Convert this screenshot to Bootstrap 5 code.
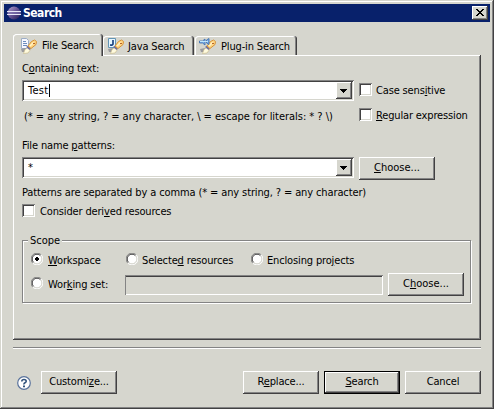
<!DOCTYPE html>
<html lang="en">
<head>
<meta charset="utf-8">
<meta name="viewport" content="width=device-width, initial-scale=1">
<title>Search</title>
<link href="https://cdn.jsdelivr.net/npm/bootstrap@5.3.0/dist/css/bootstrap.min.css" rel="stylesheet">
<style>
:root{--face:#d6d6ce;--gray:#848484;--dark:#424142;--navy:#08216b}
body{font-family:"DejaVu Sans Condensed","DejaVu Sans",sans-serif;font-stretch:condensed;font-size:11px;line-height:14px;letter-spacing:-.15px;color:#000;background:var(--face);overflow:hidden}
button{letter-spacing:inherit}
.dialog{width:494px;height:409px;padding:4px;background:var(--face);box-shadow:inset -1px -1px var(--dark),inset 1px 1px var(--face),inset -2px -2px var(--gray),inset 2px 2px #fff}
.titlebar{height:18px;background:var(--navy);color:#fff;padding:0 2px 0 3px}
.titlebar h1{font-size:12px;line-height:18px;font-weight:bold;margin-left:2px;letter-spacing:-.5px}
.raised{background:var(--face);border:0;border-radius:0;padding:0;box-shadow:inset -1px -1px var(--dark),inset 1px 1px #fff,inset -2px -2px var(--gray)}
.close-box{width:16px;height:14px}
.tabs{margin:12px 0 0 9px;height:21px}
.tab-item{height:19px;border:0;border-radius:3px 3px 0 0;padding:0 0 0 4px;background:var(--face);box-shadow:inset -1px 0 var(--dark),inset 1px 1px #fff,inset -2px 0 var(--gray);color:#000}
.tab-item.active{height:22px;width:90px;margin-bottom:-1px;position:relative;padding-left:7px}
.tab-item svg{margin-right:5px}
.tab-item span{padding-top:3px}
.tab-item.active span{padding-top:1px}
.java{width:91px}
.java svg{margin-right:4px}
.plug{width:102px;margin-left:1px}
.panel{margin-left:9px;width:468px;height:285px;padding:7px 9px 0;box-shadow:inset -1px -1px var(--dark),inset 1px 1px #fff,inset -2px -2px var(--gray)}
.field{background:#fff;height:21px;padding:2px}
.field,.check{box-shadow:inset 1px 1px var(--gray),inset -1px -1px #fff,inset 2px 2px var(--dark),inset -2px -2px var(--face)}
.combo{width:332px}
.typed{padding-left:4px;letter-spacing:.3px}
.caret{width:1px;height:13px;background:#000}
.arrow{width:16px;height:17px}
.check{appearance:none;width:13px;height:13px;margin:0 4px 0 0;background:#fff;flex:none}
.push{width:76px;height:23px;font-size:11px;line-height:21px;text-align:center;color:#000;padding-bottom:2px}
.default-push{border:1px solid #000;line-height:19px}
label,.line{height:14px;white-space:nowrap}
label span{padding-top:1px}
label svg{margin-right:5px;flex:none}
u{text-underline-offset:1px;text-decoration-thickness:1px}
.combo-row1,.combo-row2{margin-top:4px}
.case{margin:3px 0 0 5px}
.hint-row{margin-top:7px;height:14px}
.t-hint{margin:2px 0 0 2px;width:335px;letter-spacing:-.03px}
.t-file{margin-top:17px}
.choose1,.choose2{margin-left:5px;letter-spacing:0}
.t-pat{margin-top:6px;letter-spacing:-.12px}
.derived{margin-top:4px}
.derived .check{margin-right:5px}
.scope{margin-top:22px;border:1px solid var(--gray);box-shadow:1px 1px #fff,inset 1px 1px #fff;width:449px;height:63px;padding:0 6px 0 8px}
.scope-title{width:34px;height:14px;margin:-7px 0 0 -3px;padding-left:2px;background:var(--face);letter-spacing:0}
.radios{margin-top:5px}
.radios label,.r4{flex:none}
.r1{width:95px}
.r2{width:125px}
.r3 svg,.r2 svg{margin-right:4px}
.set-row{margin-top:6px}
.r4{width:94px;margin-top:4px}
.set-field{width:258px;height:20px;margin-top:2px;flex:none;box-shadow:inset 1px 1px var(--gray),inset -1px -1px #fff,inset 1px 2px var(--dark)}
.rule{margin:7px 0 0 9px;width:468px;height:2px;background:linear-gradient(var(--gray) 50%,#fff 50%)}
.footer-row{margin:22px 0 0 13px;width:464px}
.customize{margin-left:10px}
.replace,.default-push{margin-right:5px}
</style>
<script src="https://cdn.jsdelivr.net/npm/bootstrap@5.3.0/dist/js/bootstrap.bundle.min.js"></script>
</head>
<body>
<svg class="d-none" aria-hidden="true">
  <defs>
    <symbol id="torch" viewBox="0 0 16 16">
      <path d="M0 11l5-1-1 4H1z" fill="#8c8c94" opacity=".8"/>
      <path d="M2.5 15.5l1.5-4 3-2 2.500 2-2.500 3.500z" fill="#fffbde" stroke="#c6b584" stroke-width=".6"/>
      <path d="M5 9l2-1.500 3 3-1.500 1.500z" fill="#73739c"/>
      <path d="M7 8l3.500-4.500 3-1.500 2 1.500-.500 3-5 4z" fill="#ffd684" stroke="#d6943a" stroke-width="1"/>
      <path d="M9 8l3.500-3.500" stroke="#fff3c6" stroke-width="1.400"/><path d="M12 5.500h2" stroke="#b5632a"/>
    </symbol>
    <symbol id="radio" viewBox="0 0 12 12">
      <circle cx="6" cy="6" r="5" fill="#fff"/>
      <path d="M1.8 10.2A5.6 5.6 0 0 1 10.2 1.8" fill="none" stroke="#848484"/>
      <path d="M2.6 9.4A4.7 4.7 0 0 1 9.4 2.6" fill="none" stroke="#424142"/>
      <path d="M2.6 9.4A4.7 4.7 0 0 0 9.4 2.6" fill="none" stroke="#d6d6ce"/>
      <path d="M1.8 10.2A5.6 5.6 0 0 0 10.2 1.8" fill="none" stroke="#fff"/>
    </symbol>
  </defs>
</svg>
<main class="dialog">
  <header class="titlebar d-flex align-items-center">
    <svg width="14" height="14" viewBox="0 0 14 14"><defs><linearGradient id="orb" x2="1" y2="1"><stop stop-color="#b5a5ce"/><stop offset=".5" stop-color="#635294"/><stop offset="1" stop-color="#211852"/></linearGradient></defs><circle cx="7" cy="7" r="6.5" fill="url(#orb)"/><path d="M0 5.5h14M0 8.5h14" stroke="#e7e7f7"/><path d="M1 7h13" stroke="#847bb5"/></svg>
    <h1 class="mb-0 me-auto">Search</h1>
    <button class="raised close-box d-flex" aria-label="Close"><svg width="16" height="14" shape-rendering="crispEdges"><path d="M4 3h2v1h1v1h2v-1h1v-1h2v1h-1v1h-1v1h-1v1h1v1h1v1h1v1h-2v-1h-1v-1h-2v1h-1v1h-2v-1h1v-1h1v-1h1v-1h-1v-1h-1v-1h-1z"/></svg></button>
  </header>
  <nav class="tabs d-flex align-items-end">
    <button class="tab-item active d-flex align-items-center text-nowrap"><svg width="17" height="17" viewBox="0 0 17 17"><path d="M1.5 1.5h5l2 2v8h-7z" fill="#f7f7ff" stroke="#9cadc6"/><path d="M3 4.5h3M3 6.5h4M3 8.5h4" stroke="#6b8cbd"/><use href="#torch" x="1" y="1" width="16" height="16"/></svg><span>File Search</span></button>
    <button class="tab-item java d-flex align-items-center text-nowrap"><svg width="17" height="17" viewBox="0 0 17 17"><path d="M1.500 1.500h7v9h-7z" fill="#e7f7ff" stroke="#6394b5"/><use href="#torch" x="1" y="1" width="16" height="16"/><path d="M6 3v4q0 1.500-3 1" fill="none" stroke="#10397b" stroke-width="1.600"/></svg><span>Java Search</span></button>
    <button class="tab-item plug d-flex align-items-center text-nowrap"><svg width="17" height="17" viewBox="0 0 17 17"><use href="#torch" x="1" y="1" width="16" height="16"/><path d="M.5 4h3l2.500-2v6L3.500 6h-3zM7.500 3l2.500-1.500v6L7.500 6z" fill="#7bade7" stroke="#396bad" stroke-width=".8"/><path d="M1 4.500h8" stroke="#bde7ff"/></svg><span>Plug-in Search</span></button>
  </nav>
  <section class="panel">
    <div class="line">C<u>o</u>ntaining text:</div>
    <div class="d-flex combo-row1">
      <div class="field combo d-flex align-items-center"><span class="typed">Test</span><span class="caret me-auto"></span><button class="raised arrow d-flex" aria-label="Open"><svg width="16" height="17" shape-rendering="crispEdges"><path d="M4 7h7v1h-1v1h-1v1h-1v1h-1v-1h-1v-1h-1v-1h-1z"/></svg></button></div>
      <label class="case d-flex"><input type="checkbox" class="check"><span>Case sens<u>i</u>tive</span></label>
    </div>
    <div class="d-flex hint-row"><div class="line t-hint">(* = any string, ? = any character, \ = escape for literals: * ? \)</div>
      <label class="regex d-flex"><input type="checkbox" class="check"><span><u>R</u>egular expression</span></label></div>
    <div class="line t-file">File name <u>p</u>atterns:</div>
    <div class="d-flex combo-row2">
      <div class="field combo d-flex align-items-center"><span class="typed me-auto">*</span><button class="raised arrow d-flex" aria-label="Open"><svg width="16" height="17" shape-rendering="crispEdges"><path d="M4 7h7v1h-1v1h-1v1h-1v1h-1v-1h-1v-1h-1v-1h-1z"/></svg></button></div>
      <button class="raised push choose1"><u>C</u>hoose...</button>
    </div>
    <div class="line t-pat">Patterns are separated by a comma (* = any string, ? = any character)</div>
    <label class="derived d-flex"><input type="checkbox" class="check"><span>Consider deri<u>v</u>ed resources</span></label>
    <div class="scope">
      <div class="scope-title">Scope</div>
      <div class="radios d-flex">
        <label class="r1 d-flex"><svg width="12" height="12"><use href="#radio"/><path d="M5 4h2v1h1v2h-1v1h-2v-1h-1v-2h1z"/></svg><span><u>W</u>orkspace</span></label>
        <label class="r2 d-flex"><svg width="12" height="12"><use href="#radio"/></svg><span>Selecte<u>d</u> resources</span></label>
        <label class="r3 d-flex"><svg width="12" height="12"><use href="#radio"/></svg><span>Enclosing pro<u>j</u>ects</span></label>
      </div>
      <div class="d-flex set-row">
        <label class="r4 d-flex"><svg width="12" height="12"><use href="#radio"/></svg><span>Wor<u>k</u>ing set:</span></label>
        <div class="set-field"></div>
        <button class="raised push choose2 flex-shrink-0">C<u>h</u>oose...</button>
      </div>
    </div>
  </section>
  <div class="rule"></div>
  <footer class="footer-row d-flex align-items-center">
    <svg class="help" width="14" height="14" viewBox="0 0 14 14"><circle cx="7" cy="7" r="6.3" fill="#fff" stroke="#5a739c" stroke-width="1.2"/><path d="M4.8 5.4Q4.8 3.5 7 3.5t2.2 1.7Q9.2 6.2 8 6.8t-1 1.7" fill="none" stroke="#31527b" stroke-width="1.6"/><path d="M6 9.6h2v1.6h-2z" fill="#31527b"/></svg>
    <button class="raised push customize">Customi<u>z</u>e...</button>
    <button class="raised push replace ms-auto">R<u>e</u>place...</button>
    <button class="raised push default-push"><u>S</u>earch</button>
    <button class="raised push">Cancel</button>
  </footer>
</main>
</body>
</html>
